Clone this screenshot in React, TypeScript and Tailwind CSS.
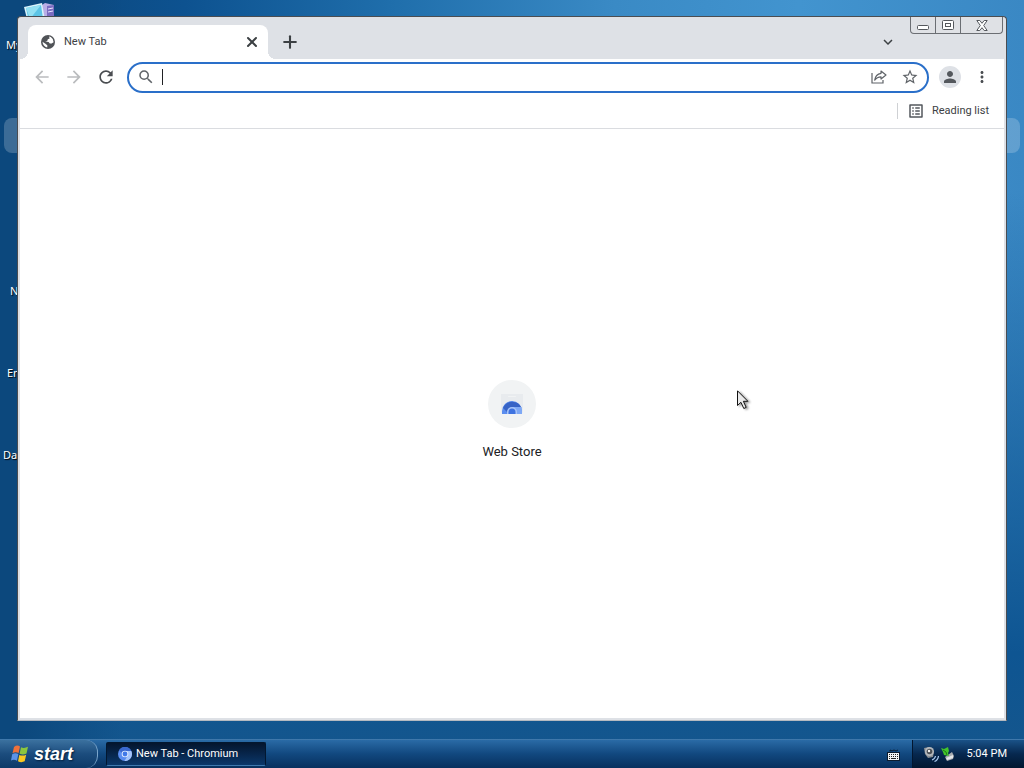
import { useState } from 'react';
import { Plus, X } from 'lucide-react';
import {
    MdArrowBack,
    MdArrowForward,
    MdExpandMore,
    MdMoreVert,
    MdOutlineListAlt,
    MdPerson,
    MdRefresh,
    MdSearch,
    MdStarBorder,
} from 'react-icons/md';

function ComputerIcon() {
    return (
        <svg width="34" height="34" viewBox="0 0 34 34" aria-hidden="true">
            <path d="M20 3l3-2 9 2v20l-9 3-3-3z" fill="#b9aee6" />
            <path d="M25 4l7-1v20l-7 3z" fill="#7a6cc0" />
            <path d="M26 7l5-1M26 10l5-1" stroke="#e8e4ff" strokeWidth="1" />
            <path d="M2 5l18-4 3 17-17 3z" fill="#d9f3fb" />
            <path d="M4 6l15-3 2 14-14 3z" fill="#5cc4e6" />
            <path d="M4 6l15-3-11 14z" fill="#93e0f3" />
        </svg>
    );
}

function GlobeIcon() {
    return (
        <svg width="14" height="14" viewBox="0 0 14 14" aria-hidden="true">
            <circle cx="7" cy="7" r="7" fill="#505357" />
            <path d="M8 1.600l.6 1.800L6.800 4.200 6.200 6 4.200 6.600 7.600 7l1.200 1.600h1.800L12.600 7.200Q12.500 3.600 9.800 2z" fill="#fff" />
            <path d="M1.500 6.800L4.800 9l1.600 1.400-.2 2.100Q2 11.600 1.500 6.800z" fill="#fff" />
        </svg>
    );
}

function ShareIcon() {
    return (
        <svg width="16" height="16" viewBox="0 0 16 16" fill="none" stroke="#5f6368" strokeWidth="1.2" aria-hidden="true">
            <path d="M1 4v10h11v-3" />
            <path d="M10 2l5 4-5 4V7.8C7.2 7.8 5.200 9 3.700 11.200 4.200 7.500 6.400 4.800 10 4.300z" strokeLinejoin="round" />
        </svg>
    );
}

function WebStoreIcon() {
    return (
        <svg width="24" height="24" viewBox="0 0 24 24" aria-hidden="true">
            <path d="M1 2h22v17a3 3 0 0 1-3 3H4a3 3 0 0 1-3-3z" fill="#e8ebee" />
            <rect x="8" y="4" width="8" height="1" rx=".5" fill="#f1f3f4" />
            <path d="M2 22v-3a10 10 0 0 1 20 0v3z" fill="#5b8def" />
            <path d="M3 16a10 10 0 0 1 18.500 0H12a5 5 0 0 0-5 4z" fill="#3763c6" />
            <path d="M12 15h9.200q.8 2 .8 4v3h-6z" fill="#7ea8f5" />
            <path d="M7 22v-2a5 5 0 0 1 10 0v2z" fill="#a9c5f8" />
            <path d="M8.500 22v-2a3.500 3.500 0 0 1 7 0v2z" fill="#3f73e0" />
        </svg>
    );
}

function FlagIcon() {
    return (
        <svg width="20" height="20" viewBox="0 0 20 20" aria-hidden="true">
            <path d="M4 3q3-2.500 6-.6L8.600 9Q5.500 7.300 2.500 9.200z" fill="#f0713a" />
            <path d="M11 3.200q3 1.600 7-.4L16.500 9.500q-3.500 1.800-6.900.2z" fill="#8cc63e" />
            <path d="M2.200 10.300q3-1.800 6.100-.2L7 16.700q-3-1.700-6-.2z" fill="#5b93e8" />
            <path d="M9.300 10.900q3.500 1.500 6.900-.2l-1.500 6.600q-3.500 1.700-6.700-.1z" fill="#fbc920" />
        </svg>
    );
}

function ChromiumIcon() {
    return (
        <svg width="14" height="14" viewBox="0 0 14 14" aria-hidden="true">
            <circle cx="7" cy="7" r="7" fill="#5a8df0" />
            <path d="M7 4h6.300A7 7 0 0 1 6.500 14l3.300-5.500z" fill="#a4c4fb" />
            <path d="M1 3.500A7 7 0 0 1 13.300 4H7a3 3 0 0 0-2.800 2z" fill="#3a68cf" />
            <circle cx="7" cy="7" r="3.300" fill="#dfeafe" />
            <circle cx="7" cy="7" r="2.400" fill="#3f78e8" />
        </svg>
    );
}

function KeyboardIcon() {
    return (
        <svg width="13" height="13" viewBox="0 0 13 13" aria-hidden="true">
            <path d="M3 3.500V2l2 1 2-1 2 1 2-1" fill="none" stroke="#0a1a2c" strokeWidth="1" />
            <rect x="0" y="4" width="13" height="9" fill="#0d1c2e" />
            <rect x="1" y="5" width="11" height="7" fill="#f4f4f4" />
            <path d="M2 6.500h9M2 8.500h9" stroke="#222" strokeDasharray="1 1" />
            <path d="M2 10.500h1m1 0h5m1 0h1" stroke="#222" />
        </svg>
    );
}

function SpeakerIcon() {
    return (
        <svg width="16" height="16" viewBox="0 0 16 16" aria-hidden="true">
            <path d="M1 2l5-1 5 4-1 6-5 1-3-4z" fill="#8b8f94" />
            <circle cx="6.500" cy="5.500" r="4.500" fill="#b4b8bc" />
            <circle cx="6.500" cy="5.500" r="2.800" fill="#4b4f54" />
            <circle cx="6" cy="5" r="1.200" fill="#f1f1f1" />
            <path d="M9 14q3-1 3.500-4M11.500 15.500Q15 14 15.500 10" fill="none" stroke="#a9c8ef" strokeWidth="1.200" />
        </svg>
    );
}

function DeviceIcon() {
    return (
        <svg width="14" height="16" viewBox="0 0 14 16" aria-hidden="true">
            <path d="M4 11l7-5 2 4-1 3-6 2z" fill="#a7abb0" />
            <path d="M5 12l7-3v3l-6 2z" fill="#e4e6e8" />
            <path d="M0 2l3 1 4-2 1 4-1 2 1 3-5-1-1-3z" fill="#43c52b" />
            <path d="M2 4l3 2 1 3" fill="none" stroke="#1f7d16" strokeWidth="1" />
        </svg>
    );
}

function MousePointer() {
    return (
        <svg className="pointer-events-none absolute left-[737px] top-[390px] drop-shadow-[2px_1px_1px_rgba(0,0,0,0.4)]" width="13" height="20" viewBox="0 0 13 20" aria-hidden="true">
            <path d="M.5.800v14.700l3.400-3.200 2.900 6.200 2.400-1.100-2.800-6.100h4.500z" fill="#e9e9e9" stroke="#111" />
        </svg>
    );
}

function DesktopItem({ label, className }: { label: string; className: string }) {
    return <span className={`absolute whitespace-nowrap text-[11px] leading-4 text-white [text-shadow:1px_1px_1px_#000] ${className}`}>{label}</span>;
}

function WindowButtons() {
    return (
        <div className="flex h-[17px] rounded-b border border-t-0 border-[#6b6e73] bg-[#dfe1e5]">
            <button aria-label="Minimize" className="flex w-[25px] items-center justify-center border-r border-[#6b6e73]">
                <svg width="12" height="12" viewBox="0 0 12 12"><rect x=".5" y="6.500" width="11" height="4" rx="1" fill="#fff" stroke="#55585d" /></svg>
            </button>
            <button aria-label="Maximize" className="flex w-[25px] items-center justify-center border-r border-[#6b6e73]">
                <svg width="12" height="10" viewBox="0 0 12 10" fill="#fff" stroke="#55585d"><rect x=".5" y=".5" width="11" height="9" rx="1" /><rect x="3.500" y="3.500" width="5" height="3" /></svg>
            </button>
            <button aria-label="Close" className="flex w-[41px] items-center justify-center">
                <svg width="12" height="11" viewBox="0 0 12 11" fill="#fff" stroke="#55585d"><path d="M.8.500h3L6 3.300 8.200.500h3L7.700 5.500l3.500 5h-3L6 7.700 3.800 10.500h-3l3.500-5z" /></svg>
            </button>
        </div>
    );
}

function TabStrip() {
    return (
        <div className="flex h-[42px] items-end pl-2">
            <div className="relative flex h-[34px] w-60 items-center rounded-t-lg bg-white pl-[13px] pr-2 before:absolute before:bottom-0 before:-left-2 before:size-2 before:bg-[radial-gradient(circle_at_0_0,transparent_8px,#fff_8px)] after:absolute after:bottom-0 after:-right-2 after:size-2 after:bg-[radial-gradient(circle_at_100%_0,transparent_8px,#fff_8px)]">
                <GlobeIcon />
                <span className="ml-[9px] flex-1 text-[11px] leading-4 text-[#3c4043]">New Tab</span>
                <button aria-label="Close tab" className="flex size-4 items-center justify-center text-[#3c4043]">
                    <X className="size-4" strokeWidth={3} />
                </button>
            </div>
            <button aria-label="New tab" className="ml-2 flex h-[34px] w-7 items-center justify-center text-[#3c4043]">
                <Plus className="size-5" strokeWidth={2.5} />
            </button>
            <div className="flex-1" />
            <button aria-label="Search tabs" className="mr-3 flex h-[34px] w-5 items-center justify-center text-[#3c4043]">
                <MdExpandMore className="size-[18px]" />
            </button>
            <div className="mr-px self-start">
                <WindowButtons />
            </div>
        </div>
    );
}

function Toolbar() {
    const [query, setQuery] = useState('');

    return (
        <div className="flex h-[37px] items-center bg-white px-1.5 text-[#5f6368]">
            <button aria-label="Back" className="flex w-8 justify-center pb-px text-[#babcbe]"><MdArrowBack className="size-5" /></button>
            <button aria-label="Forward" className="flex w-8 justify-center pb-px text-[#babcbe]"><MdArrowForward className="size-5" /></button>
            <button aria-label="Reload" className="flex w-8 justify-center pb-px text-[#4a4d51]"><MdRefresh className="size-5" /></button>
            <div className="mx-[5px] flex h-[31px] min-w-0 flex-1 items-center rounded-full border-2 border-[#2a6fc9] bg-white px-2 pb-px">
                <MdSearch className="size-[18px]" />
                <span className="ml-[7px] h-4 w-px bg-[#202124]" />
                <input
                    aria-label="Address and search bar"
                    value={query}
                    onChange={(e) => setQuery(e.target.value)}
                    className="min-w-0 flex-1 bg-transparent text-sm text-[#202124] outline-none"
                />
                <button aria-label="Share this page" className="mr-[14px]"><ShareIcon /></button>
                <button aria-label="Bookmark this tab"><MdStarBorder className="size-[18px]" /></button>
            </div>
            <button aria-label="Profile" className="flex w-8 justify-center pb-px">
                <span className="flex size-[22px] items-center justify-center rounded-full bg-[#dee1e6]">
                    <MdPerson className="size-[18px] text-[#54585d]" />
                </span>
            </button>
            <button aria-label="Menu" className="flex w-8 justify-center pb-px text-[#4a4d51]"><MdMoreVert className="size-[18px]" /></button>
        </div>
    );
}

function BookmarksBar() {
    return (
        <div className="flex h-[33px] items-center justify-end border-b border-[#dadce0] bg-white pb-[3px] pr-[15px]">
            <span className="mr-[9px] h-4 w-px bg-[#cfd1d4]" />
            <button className="flex items-center gap-[7px] text-[11px] leading-4 text-[#3c4043]">
                <MdOutlineListAlt className="size-[18px] text-[#54585d]" />
                Reading list
            </button>
        </div>
    );
}

function BrowserWindow() {
    return (
        <section className="relative flex min-h-0 flex-1 flex-col rounded-t border border-[#4a4d52] border-b-[#b6bac0] bg-[#dee1e6] px-0.5 pb-0.5 font-[Roboto,sans-serif]">
            <TabStrip />
            <Toolbar />
            <BookmarksBar />
            <main className="flex min-h-0 flex-1 items-center justify-center bg-white pb-[7px]">
                <a href="#web-store" className="flex flex-col items-center gap-4">
                    <span className="flex size-12 items-center justify-center rounded-full bg-[#f1f3f4]">
                        <WebStoreIcon />
                    </span>
                    <span className="text-[13px] leading-4 text-[#202124]">Web Store</span>
                </a>
            </main>
        </section>
    );
}

function Taskbar() {
    return (
        <footer className="flex h-[29px] shrink-0 items-stretch border-t border-[#3f78ab] bg-linear-to-b from-[#2a6ba6] via-[#11487f] to-[#08305e] font-[Roboto,sans-serif] text-[11px] text-white">
            <button className="flex w-[98px] items-center rounded-r-xl border-r border-[#7ba6cc] bg-linear-to-b from-[#3b719f] via-[#1b4c7d] to-[#0d3a68] pl-[10px]">
                <FlagIcon />
                <span className="ml-1 font-[Liberation_Sans,sans-serif] text-lg leading-5 font-bold italic [text-shadow:1px_1px_2px_#021d3a]">start</span>
            </button>
            <button className="my-0.5 ml-2 flex w-40 items-center rounded-xs border border-[#021730] border-b-[#3f79ae] bg-linear-to-b from-[#04152e] to-[#0b386b] pl-[11px]">
                <ChromiumIcon />
                <span className="ml-1">New Tab - Chromium</span>
            </button>
            <div className="flex-1" />
            <button aria-label="Keyboard" className="mr-3 flex items-center"><KeyboardIcon /></button>
            <div className="flex items-center border-l border-[#02162f] bg-linear-to-b from-[#1a5288] via-[#07284f] to-[#021730] pl-[10px] pr-[17px]">
                <SpeakerIcon />
                <span className="ml-0.5"><DeviceIcon /></span>
                <time className="ml-3 whitespace-nowrap">5:04 PM</time>
            </div>
        </footer>
    );
}

export default function App() {
    return (
        <div className="relative flex h-screen flex-col overflow-hidden bg-[linear-gradient(to_right,#0c487d_2%,transparent_12%),linear-gradient(to_bottom,transparent_25%,#0e5592_85%,#15568c),linear-gradient(to_right,#0b4478,#0d5290_18%,#1f6eab_38%,#3a8ac5_60%,#4294cf_78%,#3a88c4)] font-[Noto_Sans,sans-serif]">
            <div className="absolute left-[22px] top-[2px]"><ComputerIcon /></div>
            <div className="absolute inset-x-1 top-[118px] h-[35px] rounded-lg bg-white/20" />
            <DesktopItem label="My" className="left-[6px] top-[37px]" />
            <DesktopItem label="N" className="left-[10px] top-[283px]" />
            <DesktopItem label="En" className="left-[7px] top-[365px]" />
            <DesktopItem label="Da" className="left-[3px] top-[447px]" />
            <div className="flex min-h-0 flex-1 px-[17px] pb-[18px] pt-4">
                <BrowserWindow />
            </div>
            <Taskbar />
            <MousePointer />
        </div>
    );
}
